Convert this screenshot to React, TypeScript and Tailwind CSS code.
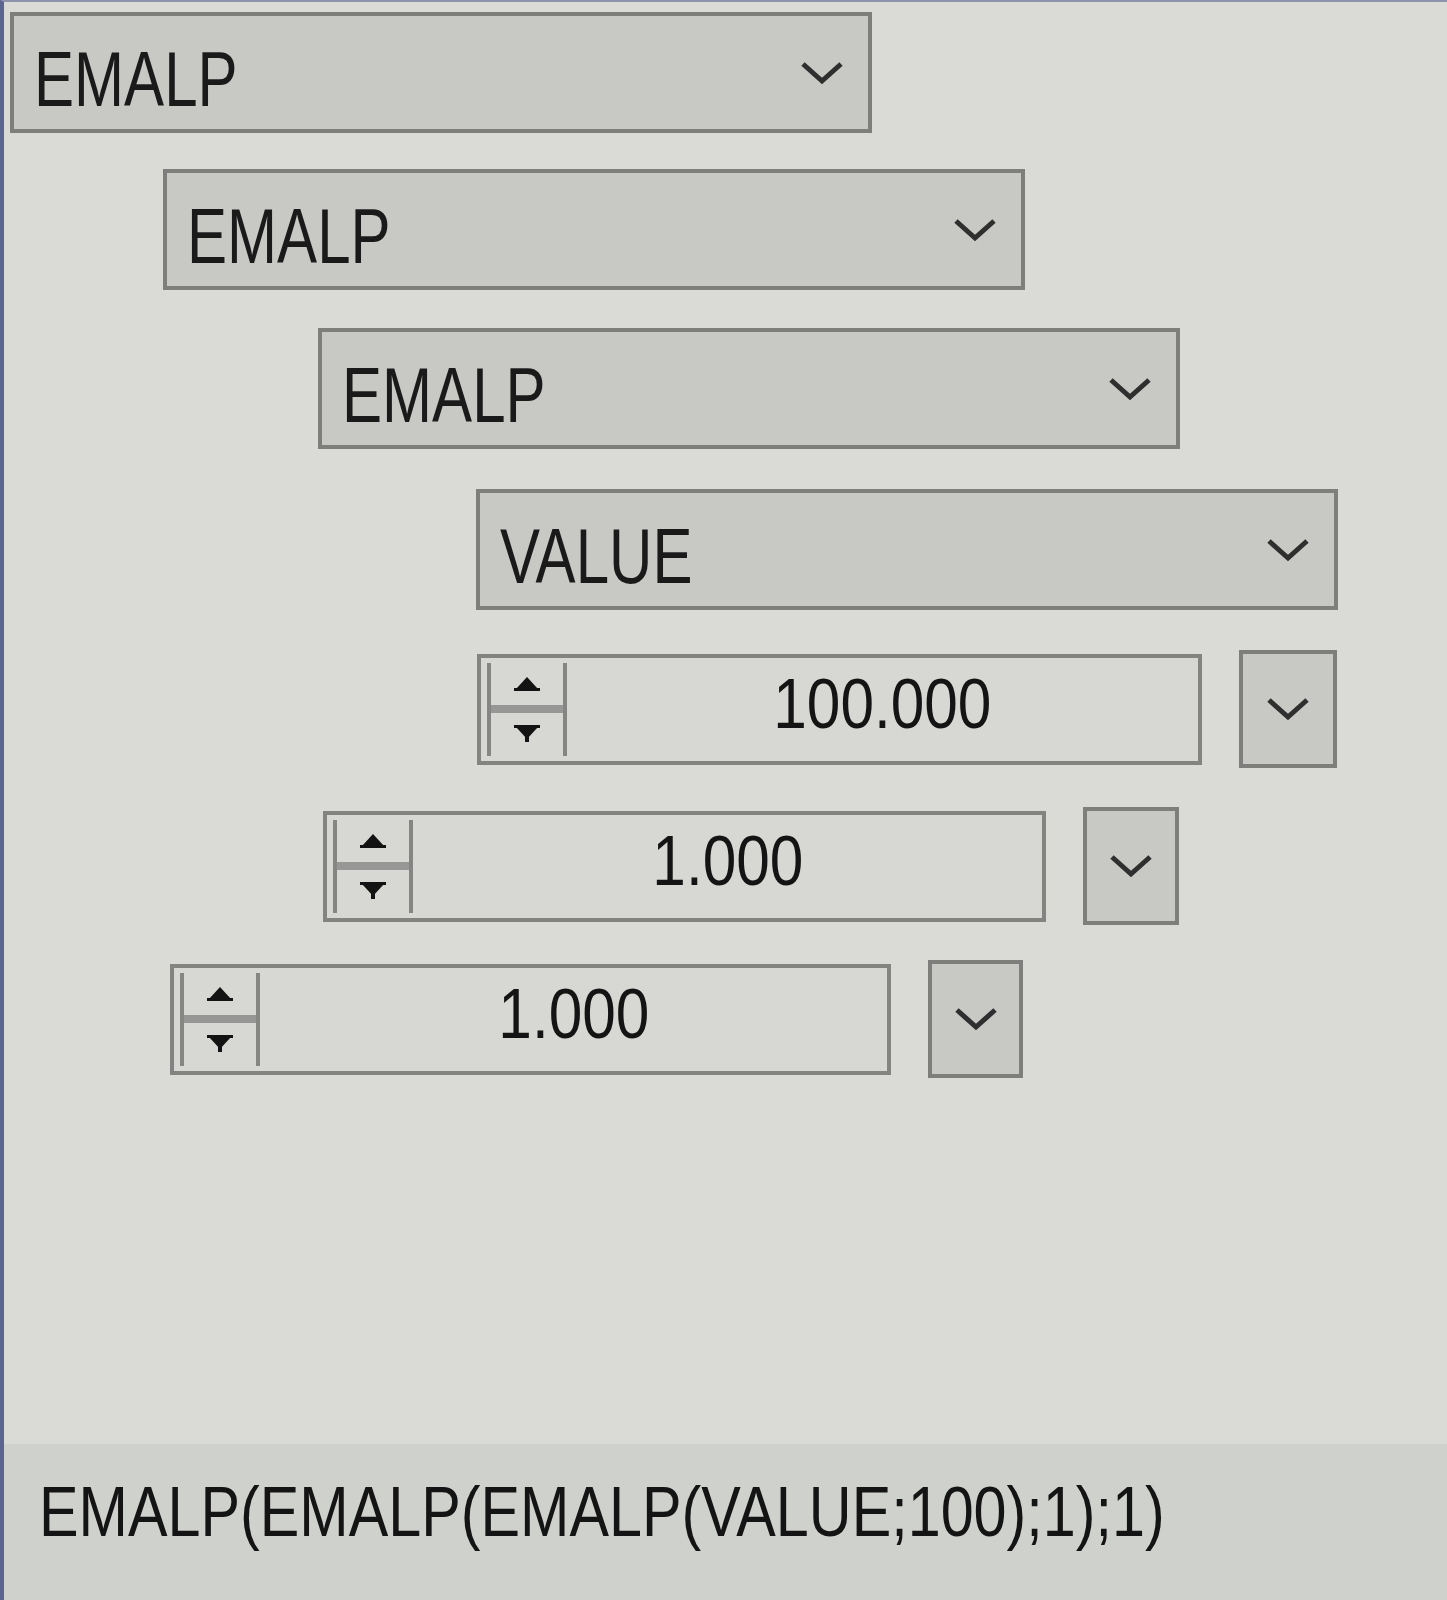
import type { ReactNode } from 'react';

const font = { fontFamily: '"Liberation Sans", Arial, sans-serif' };

function Chevron() {
  return (
    <svg width="46" height="26" viewBox="0 0 46 26" className="shrink-0">
      <polyline points="4,4 23,21 42,4" fill="none" stroke="#2e2f2e" strokeWidth="5" strokeLinejoin="miter" />
    </svg>
  );
}

function Combo({ label, className }: { label: string; className: string }) {
  return (
    <div
      className={`flex h-[121px] w-[862px] items-center justify-between border-[4px] border-[#7e7f7c] bg-[#c8c9c5] pl-[20px] pr-[23px] ${className}`}
    >
      <span className="inline-block origin-left translate-y-[6px] scale-x-[0.77] text-[78px] leading-none text-[#1a1a1a]">
        {label}
      </span>
      <Chevron />
    </div>
  );
}

function SpinArrows() {
  return (
    <div className="my-[5px] ml-[6px] flex w-[80px] shrink-0 flex-col border-x-[4px] border-[#858683]">
      <div className="flex flex-1 items-center justify-center">
        <svg width="30" height="18" viewBox="0 0 30 18">
          <polygon points="15,2 26,14 4,14" fill="#131313" />
          <rect x="2" y="13" width="26" height="3" fill="#131313" />
        </svg>
      </div>
      <div className="h-[8px] bg-[#979895]" />
      <div className="flex flex-1 items-center justify-center">
        <svg width="30" height="20" viewBox="0 0 30 20">
          <rect x="2" y="1" width="26" height="3" fill="#131313" />
          <polygon points="4,3 26,3 15,15" fill="#131313" />
          <rect x="13" y="10" width="4" height="8" fill="#131313" />
        </svg>
      </div>
    </div>
  );
}

function SpinRow({
  value,
  className,
  inputWidth,
  buttonWidth,
}: {
  value: string;
  className: string;
  inputWidth: string;
  buttonWidth: string;
}) {
  return (
    <div className={`flex items-center gap-[37px] ${className}`}>
      <div className={`flex h-[111px] border-[4px] border-[#838481] bg-[#d7d8d3] ${inputWidth}`}>
        <SpinArrows />
        <div className="flex flex-1 items-center justify-center">
          <span className="inline-block -translate-y-[6px] scale-x-[0.85] text-[71px] leading-none text-[#141414]">
            {value}
          </span>
        </div>
      </div>
      <div
        className={`flex h-[118px] items-center justify-center border-[4px] border-[#7e7f7c] bg-[#c8c9c5] ${buttonWidth}`}
      >
        <Chevron />
      </div>
    </div>
  );
}

function Panel({ children }: { children: ReactNode }) {
  return (
    <div
      className="flex h-[1600px] w-[1447px] flex-col overflow-hidden border-l-[4px] border-t-[2px] border-l-[#5b6590] border-t-[#8d93ab] bg-[#dadbd6]"
      style={font}
    >
      {children}
    </div>
  );
}

export default function App() {
  return (
    <Panel>
      <div className="flex flex-col items-start">
        <Combo label="EMALP" className="ml-[6px] mt-[10px]" />
        <Combo label="EMALP" className="ml-[159px] mt-[36px]" />
        <Combo label="EMALP" className="ml-[314px] mt-[38px]" />
        <Combo label="VALUE" className="ml-[472px] mt-[40px]" />

        <SpinRow value="100.000" className="ml-[473px] mt-[40px]" inputWidth="w-[725px]" buttonWidth="w-[98px]" />
        <SpinRow value="1.000" className="ml-[319px] mt-[39px]" inputWidth="w-[723px]" buttonWidth="w-[96px]" />
        <SpinRow value="1.000" className="ml-[166px] mt-[35px]" inputWidth="w-[721px]" buttonWidth="w-[95px]" />
      </div>

      {/* expression preview */}
      <div className="mt-auto h-[156px] bg-[#cfd1cc] pl-[35px] pt-[32px]">
        <span className="inline-block origin-left scale-x-[0.835] text-[71px] leading-none text-[#141414]">
          EMALP(EMALP(EMALP(VALUE;100);1);1)
        </span>
      </div>
    </Panel>
  );
}
